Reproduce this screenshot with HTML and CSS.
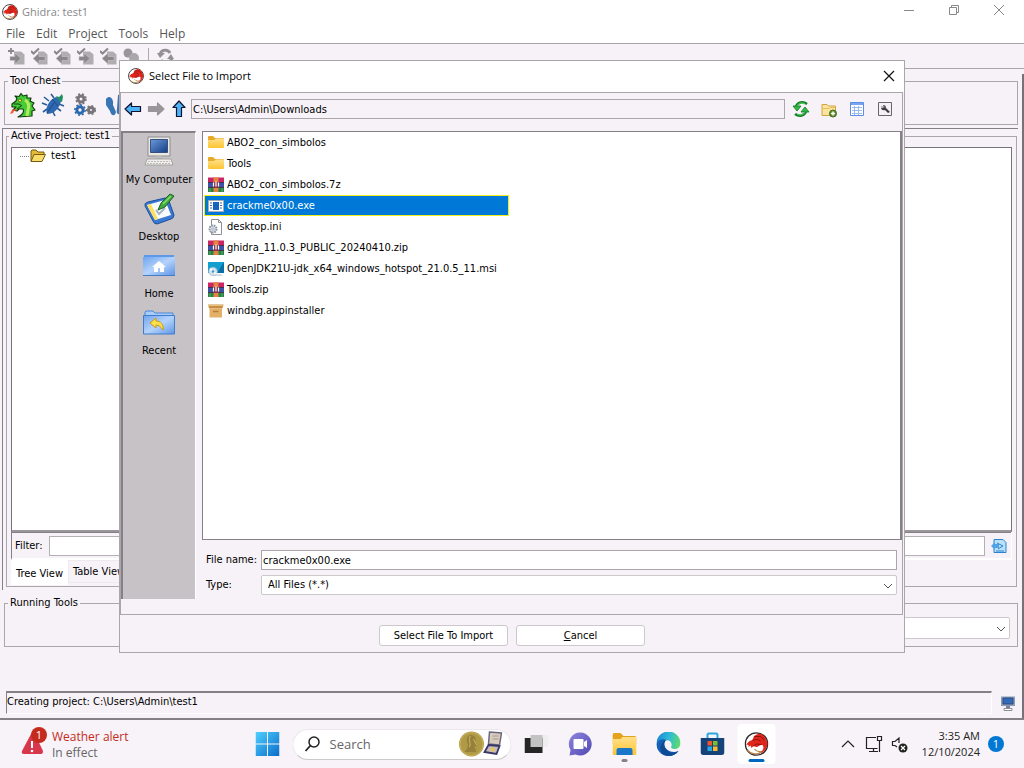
FILE: index.html
```html
<!DOCTYPE html>
<html lang="en">
<head>
    <meta charset="UTF-8">
    <meta name="viewport" content="width=device-width, initial-scale=1.0">
    <title>Ghidra: test1</title>
    <link rel="stylesheet" href="styles.css">
</head>
<body>
    <!-- shared icons -->
    <svg class="sprite" aria-hidden="true">
        <defs>
            <linearGradient id="g-folder" x1="0" y1="0" x2="0" y2="1"><stop offset="0" stop-color="#ffe08a"/><stop offset="1" stop-color="#fcc42f"/></linearGradient>
            <linearGradient id="g-blue" x1="0" y1="0" x2="1" y2="1"><stop offset="0" stop-color="#6fa4ee"/><stop offset=".5" stop-color="#b4d3fb"/><stop offset="1" stop-color="#5f96e6"/></linearGradient>
            <linearGradient id="g-screen" x1="0" y1="0" x2="1" y2="1"><stop offset="0" stop-color="#6d9ad8"/><stop offset="1" stop-color="#123d86"/></linearGradient>
            <linearGradient id="g-win" x1="0" y1="0" x2="1" y2="1"><stop offset="0" stop-color="#4fd0ff"/><stop offset="1" stop-color="#0a6cc9"/></linearGradient>
            <linearGradient id="g-edge" x1="0" y1=".3" x2="1" y2=".5"><stop offset="0" stop-color="#1b87d6"/><stop offset=".5" stop-color="#2fb9d8"/><stop offset="1" stop-color="#5fdc6a"/></linearGradient>
            <linearGradient id="g-chat" x1="0" y1="0" x2="1" y2="1"><stop offset="0" stop-color="#8f86e0"/><stop offset="1" stop-color="#5048b0"/></linearGradient>
        </defs>
        <symbol id="ghidra" viewBox="0 0 24 24">
            <circle cx="12" cy="12" r="11.200" fill="#fff" stroke="#2b2b2b" stroke-width="1.300"/>
            <path d="M3 18 C7 23 14 23 18 19 C15 20 12 20 10 17" fill="none" stroke="#b9854c" stroke-width="1.300"/>
            <path d="M1.500 12.500 L5 9 L8 8 L9.500 4 L14 1.500 L18 2.500 L21 6 L23 11 C23 16 20 20 16 21.500 C19 18 20 14 17.500 13 C15.500 12.500 14 15 11.500 15 L9 14 L7 16 L6 13.500 L4 15 L4 13 Z" fill="#e1261c"/>
            <path d="M8 8 L13 7.500 L16 9 M10 4.500 L16 4.500 L20 8 M9 14 L12 12 L17 12.500" fill="none" stroke="#8c140d" stroke-width="1"/>
        </symbol>
        <symbol id="commit" viewBox="0 0 17 17">
            <path d="M6 3.500 h7 l3.500 3 v10 H6z" fill="#b0adb0"/>
            <path d="M2 8.500 h5 v-3.500 l6 5.500 -6 5.500 v-3.500 h-5z" fill="#8a878a" stroke="#c9c5c9" stroke-width=".6"/>
            <path d="M0 3 h6 M3 0 v6" stroke="#8a878a" stroke-width="1.800"/>
        </symbol>
        <symbol id="checkout" viewBox="0 0 17 17">
            <path d="M7 3.500 h6 l3.500 3 v10 H7z" fill="#b0adb0"/>
            <path d="M14 8.500 h-6 v-3.500 l-6 5.500 6 5.500 v-3.500 h6z" fill="#8a878a" stroke="#c9c5c9" stroke-width=".6"/>
            <path d="M0 3 l2.500 2.500 L8 .5" fill="none" stroke="#8a878a" stroke-width="2"/>
        </symbol>
        <symbol id="checkin" viewBox="0 0 17 17">
            <path d="M6 3.500 h7 l3.500 3 v10 H6z" fill="#b0adb0"/>
            <path d="M2 8.500 h5 v-3.500 l6 5.500 -6 5.500 v-3.500 h-5z" fill="#8a878a" stroke="#c9c5c9" stroke-width=".6"/>
            <path d="M0 3 l2.500 2.500 L8 .5" fill="none" stroke="#8a878a" stroke-width="2"/>
        </symbol>
        <symbol id="arrow" viewBox="0 0 18 16">
            <path d="M1 8 L7.500 2 V5.500 H16.500 V10.500 H7.500 V14 Z" fill="currentColor" stroke="var(--edge, #113)" stroke-width="1.200" stroke-linejoin="round"/>
        </symbol>
        <symbol id="folder" viewBox="0 0 16 16">
            <path d="M0 2 a1 1 0 0 1 1-1 h4 l2 2 h8 a1 1 0 0 1 1 1 v3 H0z" fill="#e9a92a"/>
            <path d="M0 5 h6 l2-1.500 h8 v8.500 a1 1 0 0 1-1 1 H1 a1 1 0 0 1-1-1z" fill="url(#g-folder)"/>
        </symbol>
        <symbol id="rar" viewBox="0 0 16 16">
            <path d="M0 .5 h16 v5 H0z" fill="#cc2566"/>
            <path d="M0 5.500 h16 v5 H0z" fill="#3c51a8"/>
            <path d="M0 10.500 h16 v4.500 H0z" fill="#28824a"/>
            <path d="M0 5.500 h16 M0 10.500 h16" stroke="#30202c" stroke-width=".8"/>
            <path d="M5.500 .5 h5 v14.500 h-5z" fill="#e3853c"/>
            <path d="M5 5 h6 v6 h-6z" fill="#82354b"/>
            <path d="M5.500 5.500 v4 M8 4.500 v5 M10.500 5.500 v4" stroke="#fff" stroke-width="1.200"/>
            <path d="M2 11 v4 M14 11 v4" stroke="#56ad53"/>
        </symbol>
        <symbol id="exe" viewBox="0 0 16 16">
            <path d="M.5 2.500 h15 v11 H.5z" fill="#fff" stroke="#a9adb4"/>
            <path d="M5 4 h6 v8 H5z" fill="#1664bd"/>
            <path d="M2 5 h2 M2 7.500 h2 M2 10 h2 M12 5 h2 M12 7.500 h2 M12 10 h2" stroke="#3f6ca4"/>
        </symbol>
        <symbol id="ini" viewBox="0 0 16 16">
            <path d="M3.500 .5 h7 l3 3 v12 h-10z" fill="#fff" stroke="#8e9093"/>
            <path d="M10.500 .5 v3 h3" fill="none" stroke="#8e9093"/>
            <circle cx="5" cy="10" r="3.500" fill="#dfe3ea" stroke="#8d96a6" stroke-width="2" stroke-dasharray="1.600 .8"/>
            <circle cx="5" cy="10" r="1.200" fill="#fff" stroke="#8d96a6" stroke-width=".7"/>
        </symbol>
        <symbol id="msi" viewBox="0 0 16 16">
            <path d="M0 1 h16 v11 H0z" fill="#119fd0"/>
            <path d="M16 1 v11 H9z" fill="#0a6ea8"/>
            <path d="M2 13 h11 l2 2 H4z" fill="#d7dce2"/>
            <circle cx="5" cy="10.500" r="4.300" fill="#d5e2ee" stroke="#9fb3c5" stroke-width=".6"/>
            <path d="M5 10.500 L2 7.500 M5 10.500 l3.500 2.500" stroke="#f9fcff" stroke-width="1.400"/>
            <circle cx="5" cy="10.500" r="1.200" fill="#3b97c6"/>
        </symbol>
        <symbol id="box" viewBox="0 0 16 16">
            <path d="M0 1.500 h15.500 l-1 4 H1z" fill="#c78f43"/>
            <path d="M1.500 5.500 h12.500 v9 h-12.500z" fill="#e3b067"/>
            <path d="M5 8.500 h5.500" stroke="#b57f3b" stroke-width="1.500"/>
            <path d="M0 2.500 h15.500" stroke="#e9c07e"/>
        </symbol>
        <symbol id="screen" viewBox="0 0 32 32">
            <path d="M5 1 h22 v19 H5z" fill="#e9e8e4" stroke="#8d8d8c"/>
            <path d="M7.500 3.500 h17 v13 h-17z" fill="url(#g-screen)" stroke="#38507d"/>
            <path d="M13 20 h6 l1 4 h-8z" fill="#bbb"/>
            <path d="M4 23 h24 l2 6 H2z" fill="#f0efec" stroke="#a3a3a1"/>
            <path d="M5 25.500 h22 M4 27.500 h24" stroke="#bcbcba" stroke-dasharray="2 1"/>
        </symbol>
        <symbol id="chevron" viewBox="0 0 10 6"><path d="M1 1 l4 4 4-4" fill="none" stroke="#555" stroke-width="1"/></symbol>
    </svg>

    <main class="window">
        <header class="titlebar">
            <svg class="icon16"><use href="#ghidra"/></svg>
            <h1>Ghidra: test1</h1>
            <div class="window-buttons">
                <button aria-label="Minimize"><svg viewBox="0 0 12 12"><path d="M1 6.500 h10"/></svg></button>
                <button aria-label="Restore"><svg viewBox="0 0 12 12"><path d="M1.500 3.500 h7 v7 h-7z M3.500 3.500 v-2 h7 v7 h-2"/></svg></button>
                <button aria-label="Close"><svg viewBox="0 0 12 12"><path d="M1 1 l10 10 M11 1 L1 11"/></svg></button>
            </div>
        </header>
        <nav class="menubar">
            <button>File</button>
            <button>Edit</button>
            <button>Project</button>
            <button>Tools</button>
            <button>Help</button>
        </nav>
        <div class="toolbar">
            <button aria-label="Add to version control" disabled><svg><use href="#commit"/></svg></button>
            <button aria-label="Check out" disabled><svg><use href="#checkout"/></svg></button>
            <button aria-label="Update" disabled><svg><use href="#checkout"/></svg></button>
            <button aria-label="Check in" disabled><svg><use href="#checkin"/></svg></button>
            <button aria-label="Undo checkout" disabled><svg><use href="#checkout"/></svg></button>
            <button aria-label="Find checkouts" disabled><svg viewBox="0 0 17 17"><circle cx="5" cy="5" r="4.500" fill="#999699"/><circle cx="11" cy="10" r="5" fill="#aaa7aa"/></svg></button>
            <span class="separator"></span>
            <button aria-label="Refresh" disabled><svg viewBox="0 0 17 17"><path d="M3 7 C4 1 11 1 13 5 M15 10 C13 16 6 16 4 12" fill="none" stroke="#949194" stroke-width="3"/><path d="M0 5 h8 l-5 5z M10 11 l4-5 3 5z" fill="#949194"/></svg></button>
        </div>

        <div class="workspace">
            <fieldset class="group tool-chest">
                <legend>Tool Chest</legend>
                <div class="tools">
                    <button aria-label="CodeBrowser">
                        <svg viewBox="0 0 26 26"><path d="M2 12 L6 9 L7 6 L5 4 L9 4.500 L11 1.500 L13 4 L17 3 L17 6 L21 6 L20 9 L24 11 L22 14 L25 18 L22 19 L22 24 L8 25 C12 23 15 20 13 17 L9 17 L7 19 L3 18 L6 15 L2 15 Z" fill="#45cc39" stroke="#143d10" stroke-width="1.200" stroke-linejoin="round"/><path d="M15 8 C20 11 19 15 18 18 L17 24" fill="none" stroke="#b6ea5c" stroke-width="3"/><path d="M4 12 L9 12 L12 14 M7 17 L11 14" fill="none" stroke="#143d10"/><circle cx="10" cy="8.500" r="1.500" fill="#ffec2e" stroke="#143d10" stroke-width=".6"/><path d="M5 17 l-3 1 -2 4 3-1 1-2 3-1z" fill="#f6562a"/></svg>
                    </button>
                    <button aria-label="Debugger">
                        <svg viewBox="0 0 26 26"><path d="M15 5 C19 6 21 9 19 12 C17 18 12 22 6 22 C4 17 7 8 15 5 Z" fill="#2d68b0"/><path d="M8 9 L3 5 M6 13 L1 11 M6 17 L2 20 M13 6 L10 2 M16 16 L20 19 M18 12 L23 14 M12 20 L14 24" fill="none" stroke="#285c9c" stroke-width="1.600"/><path d="M11 7 L17 14 M13 11 L6 21" stroke="#1d4379" stroke-width=".8"/><path d="M15 4 l3 1 3-3 1 3 -1 5 -3-1z" fill="#219060"/></svg>
                    </button>
                    <button aria-label="Emulator">
                        <svg viewBox="0 0 26 26"><g fill="none" stroke-width="3"><circle cx="9" cy="7" r="3" stroke="#777578"/><circle cx="8" cy="18" r="3.200" stroke="#2c68ae"/><circle cx="19" cy="18" r="2.500" stroke="#777578"/></g><g fill="none" stroke-width="1.500" stroke-dasharray="2 2"><circle cx="9" cy="7" r="5" stroke="#777578"/><circle cx="8" cy="18" r="5.200" stroke="#2c68ae"/><circle cx="19" cy="18" r="4.300" stroke="#777578"/></g></svg>
                    </button>
                    <button aria-label="Version Tracking">
                        <svg viewBox="0 0 26 26"><path d="M3 7 C7 2 11 7 10 13 L13 20 C12 25 8 24 7 19 L3 13z M15 3 C20 1 22 5 21 12 L18 21 C15 24 13 21 14 17z" fill="#3974b5"/></svg>
                    </button>
                </div>
            </fieldset>

            <div class="project-pane">
                <fieldset class="group project">
                    <legend>Active Project: test1</legend>
                    <div class="tree">
                        <div class="tree-node">
                            <span class="tree-line"></span>
                            <svg class="icon16" viewBox="0 0 16 16"><path d="M1 13 V3 L2 2 h4 l2 2 h6 v3" fill="#e3ba37" stroke="#765b11"/><path d="M1 13.500 L4 6.500 h11.500 L12 13.500z" fill="#f7dc6c" stroke="#765b11"/></svg>
                            <span>test1</span>
                        </div>
                    </div>
                    <div class="filter-row">
                        <div class="filter-bar">
                            <label for="filter">Filter:</label>
                            <input id="filter" type="text">
                            <button aria-label="Filter options"><svg class="icon16" viewBox="0 0 16 16"><path d="M3 1.500 h9 l3 3 v10 H3z" fill="#bde0fa" stroke="#2683cf"/><path d="M0 8 l4-4 v2 h4 v4 H4 v2z" fill="#50a3e6"/><path d="M6 5 l6 3 -5 3 M5 13 h8" fill="none" stroke="#2683cf"/></svg></button>
                        </div>
                    </div>
                    <div class="tabs">
                        <button class="tab active">Tree View</button>
                        <button class="tab">Table View</button>
                    </div>
                </fieldset>
            </div>

            <fieldset class="group running">
                <legend>Running Tools</legend>
                <div class="select-box">
                    <select aria-label="Workspace"><option></option></select>
                    <svg class="chevron"><use href="#chevron"/></svg>
                </div>
            </fieldset>
        </div>

        <footer class="statusbar">
            <div class="status-text">Creating project: C:\Users\Admin\test1</div>
            <button aria-label="Console"><svg class="icon16" viewBox="0 0 16 16"><path d="M1 1.500 h14 v9.500 H1z" fill="#8d9bb5"/><path d="M3 3 h10 v6 H3z" fill="#356bb5" stroke="#24447c" stroke-width=".8"/><path d="M6 11 h4 v2 H6z" fill="#77818f"/><path d="M4 13.500 h8 v2 H4z" fill="#fff" stroke="#8a8f98"/></svg></button>
        </footer>
    </main>

    <section class="dialog" role="dialog" aria-labelledby="dialog-title">
        <header class="dialog-title">
            <svg class="icon16"><use href="#ghidra"/></svg>
            <h2 id="dialog-title">Select File to Import</h2>
            <button aria-label="Close"><svg viewBox="0 0 12 12"><path d="M1 1 l10 10 M11 1 L1 11"/></svg></button>
        </header>
        <div class="dialog-content">
            <div class="path-bar">
                <div class="path-nav">
                    <button class="blue" aria-label="Back"><svg><use href="#arrow"/></svg></button>
                    <button class="grey flip" aria-label="Forward"><svg><use href="#arrow"/></svg></button>
                    <button class="blue up" aria-label="Up"><svg><use href="#arrow"/></svg></button>
                </div>
                <input class="path" type="text" value="C:\Users\Admin\Downloads" aria-label="Path" readonly>
                <div class="path-tools">
                    <button aria-label="Refresh"><svg viewBox="0 0 18 18"><path d="M4 7 C5 2 11 1 15 4 M14 11 C13 16 7 17 3 14" fill="none" stroke="#15802b" stroke-width="2.500"/><path d="M1 6 L9 6 L5 11z M9 12 L13 7 L17 12z" fill="#31bd3f" stroke="#0d7424" stroke-width=".8"/><path d="M5 6 C6 3 10 2 13 4 M13 12 C12 15 8 16 5 14" fill="none" stroke="#4cd455"/></svg></button>
                    <button aria-label="New folder"><svg viewBox="0 0 18 18"><path d="M2 15.500 V4.500 h5 l1.500 1.500 h7 v9.500z" fill="#fbe49b" stroke="#d0a345"/><path d="M2.500 8.500 h7 l1-1 h5" fill="none" stroke="#e8bd5c"/><circle cx="13" cy="13.500" r="3.500" fill="#5d8e2b" stroke="#456b20"/><path d="M11 13.500 h4 M13 11.500 v4" stroke="#fff" stroke-width="1.400"/></svg></button>
                    <button aria-label="Details view"><svg viewBox="0 0 18 18"><path d="M2.500 2.500 h13 v13 h-13z" fill="#fff" stroke="#5d8ee5"/><path d="M3 4 h12" stroke="#79a4ef" stroke-width="2"/><path d="M4 7.500 h10 M4 10.500 h10 M4 13.500 h10 M6.500 6 v9 M10.500 6 v9" stroke="#9ab9ef"/></svg></button>
                    <button aria-label="Options"><svg viewBox="0 0 18 18"><path d="M2.500 2.500 h13 v13 h-13z" fill="#f4f1f4" stroke="#666"/><path d="M5 8 a3 3 0 0 0 4 2 l3 3 2-1 -4-4 a3 3 0 0 0-3-3 l1 2 -1 1z" fill="#3d3b3e"/><path d="M5 7 h5" stroke="#777"/></svg></button>
                </div>
            </div>

            <div class="chooser">
                <nav class="places">
                    <button>
                        <svg><use href="#screen"/></svg>
                        My Computer
                    </button>
                    <button>
                        <svg viewBox="0 0 32 32"><path d="M2 13 Q1 10 5 9 L22 5 Q25 5 26 8 L31 22 Q31 25 28 26 L14 31 Q11 31 10 28 Z" fill="#3b78d2" stroke="#1c4f9c"/><path d="M4 12 L22 7 L28 22 L12 27 Z" fill="#f9fbff"/><path d="M4 12 L8 11 L15 26 L12 27z" fill="#ffe05b"/><path d="M13 17 L16 21 L22 15" fill="none" stroke="#a7b3c5" stroke-width="2"/><path d="M15 17 L18 10 L27 1 L31 3 L22 14 Z" fill="#41a63b" stroke="#176623"/><path d="M20 11 L28 3" stroke="#92dc7b" stroke-width="1.500"/></svg>
                        Desktop
                    </button>
                    <button>
                        <svg viewBox="0 0 32 32"><path d="M1 5 h30 v4 H1z" fill="#5e98e8"/><path d="M0 7 h32 v18 H0z" fill="url(#g-blue)"/><path d="M0 25.500 h32" stroke="#457bc7"/><path d="M16 11 l7 6 h-2 v5 h-4 v-4 h-2 v4 h-4 v-5 H9z" fill="#fff"/></svg>
                        Home
                    </button>
                    <button>
                        <svg viewBox="0 0 32 32"><path d="M2 9 V5 l1-1 h7 l2 2 h18 v3" fill="#a9cdf8" stroke="#4a86d8"/><path d="M.5 8.500 h31 v18.500 H.5z" fill="url(#g-blue)" stroke="#3e7ccc"/><path d="M7 16 L13 11 V14 C18 14 21 18 20 23 C18 20 16 18 13 18 V21 Z" fill="#ffe04b" stroke="#c99a15"/></svg>
                        Recent
                    </button>
                </nav>

                <div class="files-column">
                    <ul class="file-list">
                        <li><svg class="icon16"><use href="#folder"/></svg>ABO2_con_simbolos</li>
                        <li><svg class="icon16"><use href="#folder"/></svg>Tools</li>
                        <li><svg class="icon16"><use href="#rar"/></svg>ABO2_con_simbolos.7z</li>
                        <li class="selected"><svg class="icon16"><use href="#exe"/></svg>crackme0x00.exe</li>
                        <li><svg class="icon16"><use href="#ini"/></svg>desktop.ini</li>
                        <li><svg class="icon16"><use href="#rar"/></svg>ghidra_11.0.3_PUBLIC_20240410.zip</li>
                        <li><svg class="icon16"><use href="#msi"/></svg>OpenJDK21U-jdk_x64_windows_hotspot_21.0.5_11.msi</li>
                        <li><svg class="icon16"><use href="#rar"/></svg>Tools.zip</li>
                        <li><svg class="icon16"><use href="#box"/></svg>windbg.appinstaller</li>
                    </ul>
                    <form class="fields">
                        <label for="filename">File name:</label>
                        <input id="filename" type="text" value="crackme0x00.exe">
                        <label for="filetype">Type:</label>
                        <div class="select-box">
                            <select id="filetype"><option>All Files (*.*)</option></select>
                            <svg class="chevron"><use href="#chevron"/></svg>
                        </div>
                    </form>
                </div>
            </div>
        </div>
        <footer class="dialog-buttons">
            <button>Select File To Import</button>
            <button><u>C</u>ancel</button>
        </footer>
    </section>

    <footer class="taskbar">
        <button class="weather">
            <svg viewBox="0 0 28 28"><path d="M11 7 Q13 5 15 7 L23 24 Q23 27 21 27 H4 Q1 27 2 24 Z" fill="#d8364a"/><path d="M12 14 v7" stroke="#fff" stroke-width="2"/><circle cx="12" cy="24" r="1.300" fill="#fff"/><circle cx="19" cy="8" r="8" fill="#c42b1c"/><text x="19" y="12" text-anchor="middle" fill="#fff" font-size="11">1</text></svg>
            <span><b>Weather alert</b><small>In effect</small></span>
        </button>
        <div class="taskbar-center">
            <button aria-label="Start"><svg viewBox="0 0 24 24"><path d="M0 0 h11.500 v11.500 H0z M12.500 0 H24 v11.500 H12.500z M0 12.500 h11.500 V24 H0z M12.500 12.500 H24 V24 H12.500z" fill="url(#g-win)"/></svg></button>
            <label class="search">
                <svg class="glass" viewBox="0 0 16 16"><circle cx="9.500" cy="6" r="5" fill="none" stroke="#222" stroke-width="1.500"/><path d="M6 9.500 L1 15" stroke="#222" stroke-width="1.800"/></svg>
                <input type="text" placeholder="Search" aria-label="Search">
                <svg class="medal" viewBox="0 0 44 26"><circle cx="13" cy="13" r="12.500" fill="#b19a45"/><circle cx="13" cy="13" r="11.500" fill="none" stroke="#c7b25f"/><path d="M12 4 C17 4 18 8 17 11 L19 14 L16 16 L18 21 H6 C8 18 10 17 9 12 C7 8 9 5 12 4z" fill="#97803a"/><path d="M12 5 C9 8 13 11 11 16 M15 8 L18 14" stroke="#cfb969" fill="none"/><path d="M31 1 L43 2 L41 14 L30 13z" fill="#d9cbbb" stroke="#6b6782" stroke-width="1.500"/><path d="M30 14 L41 15 L38 23 L26 21z" fill="#c5bac4" stroke="#383765" stroke-width="1.800"/><circle cx="34" cy="18.500" r="2.300" fill="#e1c65c"/><path d="M34 5 h6 M34 8 h6" stroke="#a69b95"/></svg>
            </label>
            <button aria-label="Task view"><svg viewBox="0 0 24 24"><path d="M8 3 h16 v12 H8z" fill="#efedef"/><path d="M0 6 h18 v15 H0z" fill="#252525"/><path d="M6 3 h12 v12 H6z" fill="#c4c3c4"/></svg></button>
            <button aria-label="Chat"><svg viewBox="0 0 24 24"><path d="M12 .5 a11.500 11.500 0 1 1-5 22 L1 23.500 2 18 A11.500 11.500 0 0 1 12 .5z" fill="url(#g-chat)"/><path d="M6 7 h8 a1 1 0 0 1 1 1 v8 a1 1 0 0 1-1 1 H6 a1 1 0 0 1-1-1 V8 a1 1 0 0 1 1-1z M15.500 10 l3-2 v8 l-3-2z" fill="#fff"/></svg></button>
            <button class="open" aria-label="File Explorer"><svg viewBox="0 0 24 24"><path d="M0 3 a2 2 0 0 1 2-2 h6 l3 3 h11 a2 2 0 0 1 2 2 v6 H0z" fill="#e5a21b"/><path d="M0 7 h8 l2-2 h14 v17 a1 1 0 0 1-1 1 H1 a1 1 0 0 1-1-1z" fill="url(#g-folder)"/><path d="M4 23 v-5 a2 2 0 0 1 2-2 h12 a2 2 0 0 1 2 2 v5z" fill="#1877c9"/></svg></button>
            <button aria-label="Edge"><svg viewBox="0 0 24 24"><path d="M0 12 A12 12 0 0 1 24 11 C24 15 21 17 18 17 C15 17 14 16 15 14 C16 10 12 7 8 9 C4 10 2 14 3 18 C1 16 0 14 0 12z" fill="url(#g-edge)"/><path d="M0 12 C1 8 6 6 10 8 C7 9 7 13 9 16 C12 20 18 21 22 19 C17 26 7 25 3 20 C1 18 0 15 0 12z" fill="#1560b5"/><path d="M10 8 C7 10 7 15 11 19 C14 21 18 21 22 19 C18 25 10 25 6 22 C2 17 4 10 10 8z" fill="#104a94"/></svg></button>
            <button aria-label="Microsoft Store"><svg viewBox="0 0 24 24"><path d="M7 6 V3 a1.500 1.500 0 0 1 1.500-1.500 h7 A1.500 1.500 0 0 1 17 3 v3" fill="none" stroke="#2ba7e0" stroke-width="2"/><path d="M0 6 h24 v14 a3 3 0 0 1-3 3 H3 a3 3 0 0 1-3-3z" fill="#154278"/><path d="M7 9 h4.500 v4.500 H7z" fill="#f1532b"/><path d="M12.500 9 H17 v4.500 h-4.500z" fill="#81bc2c"/><path d="M7 14.500 h4.500 V19 H7z" fill="#28a8e8"/><path d="M12.500 14.500 H17 V19 h-4.500z" fill="#fdbb2b"/></svg></button>
            <button class="open current" aria-label="Ghidra"><svg><use href="#ghidra"/></svg></button>
        </div>
        <div class="tray">
            <button aria-label="Hidden icons"><svg viewBox="0 0 18 18"><path d="M3 12 l6-6 6 6"/></svg></button>
            <button aria-label="Network"><svg viewBox="0 0 18 18"><path d="M11 2.500 H1.500 v11 h11 M8.500 14 v3 M4 16.500 h9 M12.500 1.500 h4 v4 h-4z M14.500 6 v11"/></svg></button>
            <button aria-label="Volume muted"><svg viewBox="0 0 18 18"><path d="M6 12 L4 10.500 H1.500 v-4 H4 L8 3 v5"/><circle cx="12" cy="13" r="4.500" class="mute"/><path d="M10 11 l4 4 M14 11 l-4 4" class="cross"/></svg></button>
            <time datetime="2024-12-10T03:35">3:35 AM<br>12/10/2024</time>
            <span class="badge">1</span>
        </div>
    </footer>
</body>
</html>
```

FILE: styles.css
```css
* {
    box-sizing: border-box;
}
body {
    margin: 0;
    height: 100vh;
    display: flex;
    flex-direction: column;
    position: relative;
    background: #f7f2f7;
    color: #000;
    font-family: "DejaVu Sans Condensed", "DejaVu Sans", sans-serif;
    font-size: 11px;
    line-height: 14px;
    overflow: hidden;
}
button, input, select {
    font: inherit;
    color: inherit;
    margin: 0;
}
button {
    padding: 0;
    border: 0;
    background: none;
}
svg {
    display: block;
    flex: none;
}
h1, h2 {
    margin: 0;
    font-weight: normal;
}
.sprite {
    position: absolute;
    width: 0;
    height: 0;
}
.icon16 {
    width: 16px;
    height: 16px;
}

/* main window */
.window {
    flex: 1;
    min-height: 0;
    display: flex;
    flex-direction: column;
    border-bottom: 2px solid #858085;
}
.titlebar {
    display: flex;
    align-items: center;
    height: 23px;
    padding-left: 2px;
    gap: 4px;
    background: #fff;
    color: #888;
}
.titlebar h1 {
    flex: 1;
    font: 11px/16px "Open Sans", sans-serif;
}
.window-buttons {
    display: flex;
    align-self: flex-start;
    gap: 33px;
    padding: 4px 19px 0 0;
}
.window-buttons svg {
    width: 12px;
    height: 12px;
    fill: none;
    stroke: #888;
}
.menubar {
    display: flex;
    gap: 11px;
    height: 21px;
    padding: 1px 6px 0;
    background: #fff;
    border-bottom: 1px solid #a8a5a8;
    font: 12px/20px "Open Sans", sans-serif;
    color: #555;
}
.toolbar {
    display: flex;
    align-items: center;
    gap: 6px;
    height: 25px;
    padding: 0 8px;
    border-bottom: 1px solid #a8a5a8;
}
.toolbar svg {
    width: 17px;
    height: 17px;
}
.separator {
    width: 1px;
    height: 17px;
    margin: 0 2px;
    background: #aaa;
}
.workspace {
    flex: 1;
    min-height: 0;
    display: flex;
    flex-direction: column;
    margin-top: 5px;
    padding-right: 4px;
    border-right: 2px solid #77727a;
}
.group {
    min-width: 0;
    margin: 0;
    padding: 0;
    border: 1px solid #aaa6aa;
}
.group legend {
    margin-left: 3px;
    padding: 0 2px;
}
.tool-chest {
    height: 51px;
    margin-left: 4px;
}
.tools {
    display: flex;
    gap: 5px;
    padding: 4px 5px;
}
.tools svg {
    width: 26px;
    height: 26px;
}
.project-pane {
    flex: 1;
    min-height: 0;
    display: flex;
    margin: 3px 0 6px 2px;
    padding: 0 1px 3px 3px;
    border-top: 1px solid #858085;
    border-left: 1px solid #858085;
}
.project {
    flex: 1;
    display: flex;
    flex-direction: column;
    padding: 4px 4px 1px;
}
.project legend {
    margin-left: -2px;
}
.tree {
    flex: 1;
    background: #fff;
    border: 1px solid #77727a;
    border-bottom: 2px solid #999599;
}
.tree-node {
    display: flex;
    align-items: center;
    gap: 5px;
    padding-left: 8px;
}
.tree-line {
    width: 9px;
    margin-right: -4px;
    border-top: 1px dotted #888;
}
.filter-row {
    border-left: 1px solid #858085;
    border-bottom: 2px solid #fff;
    border-right: 1px solid #fff;
}
.filter-bar {
    display: flex;
    align-items: center;
    height: 26px;
    gap: 6px;
    padding: 0 4px 0 3px;
    border-top: 1px solid #858085;
}
.filter-bar input {
    flex: 1;
    height: 20px;
    background: #fff;
    border: 1px solid #b3afb3;
}
.tabs {
    display: flex;
    height: 25px;
}
.tab {
    height: 23px;
    padding: 0 4px;
    border: 1px solid #eee9ee;
    white-space: nowrap;
}
.tab.active {
    height: 25px;
    padding: 3px 5px 0;
    border: 0;
    background: #fff;
}
.running {
    height: 51px;
    margin: 0 0 0 4px;
}
.running .select-box {
    margin: 7px 7px 0 50%;
}
.select-box {
    position: relative;
}
.select-box select {
    display: block;
    width: 100%;
    height: 20px;
    padding: 0 6px;
    appearance: none;
    background: #fff;
    border: 1px solid #ccc8cc;
    border-radius: 2px;
}
.select-box select:empty, .running .select-box select {
    height: 22px;
}
.chevron {
    position: absolute;
    right: 4px;
    top: 50%;
    width: 10px;
    height: 6px;
    margin-top: -2px;
}
.statusbar {
    display: flex;
    align-items: center;
    gap: 8px;
    height: 71px;
    padding: 44px 6px 4px;
    border-right: 2px solid #77727a;
}
.status-text {
    flex: 1;
    height: 23px;
    padding: 2px 0;
    border: 1px solid #fff;
    border-top: 2px solid #858085;
    border-left: 1px solid #858085;
}

/* import dialog */
.dialog {
    position: absolute;
    left: 119px;
    right: 119px;
    top: 60px;
    height: 593px;
    display: flex;
    flex-direction: column;
    background: #f7f2f7;
    border: 1px solid #aaa6aa;
}
.dialog-title {
    display: flex;
    align-items: center;
    gap: 5px;
    height: 31px;
    padding: 0 9px 2px 8px;
    background: #fff;
}
.dialog-title h2 {
    flex: 1;
    font: 11px/16px "Open Sans", sans-serif;
}
.dialog-title button svg {
    width: 12px;
    height: 12px;
    fill: none;
    stroke: #111;
    stroke-width: 1.2;
}
.dialog-content {
    flex: 1;
    min-height: 0;
    display: flex;
    flex-direction: column;
    margin-right: 1px;
    border: 1px solid #aaa6aa;
}
.path-bar {
    display: flex;
    align-items: center;
    gap: 3px;
    height: 32px;
    margin-bottom: 6px;
    padding: 0 8px 0 3px;
}
.path-nav {
    display: flex;
    gap: 5px;
}
.path-bar svg {
    width: 18px;
    height: 18px;
}
.blue {
    color: #4cb4f5;
}
.grey {
    color: #999699;
    --edge: #999699;
}
.flip svg {
    transform: scaleX(-1);
}
.up svg {
    transform: rotate(90deg);
}
.path {
    flex: 1;
    height: 20px;
    padding: 0 1px;
    background: #f7f2f7;
    border: 1px solid #aaa6aa;
}
.path-tools {
    display: flex;
    gap: 10px;
    padding-left: 4px;
}
.chooser {
    flex: 1;
    min-height: 0;
    display: flex;
    gap: 6px;
}
.places {
    display: flex;
    flex-direction: column;
    width: 75px;
    margin-bottom: 15px;
    background: #c6c2c6;
    border-top: 2px solid #858085;
    border-left: 2px solid #858085;
    border-right: 1px solid #fff;
}
.places button {
    display: flex;
    flex-direction: column;
    align-items: center;
    gap: 5px;
    height: 57px;
    padding-top: 3px;
    white-space: nowrap;
}
.places svg {
    width: 32px;
    height: 32px;
}
.files-column {
    flex: 1;
    display: flex;
    flex-direction: column;
}
.file-list {
    flex: 1;
    margin: 0;
    padding: 0 1px;
    list-style: none;
    background: #fff;
    border: 1px solid #858085;
    border-right-width: 2px;
}
.file-list li {
    display: flex;
    align-items: center;
    gap: 3px;
    width: 305px;
    height: 21px;
    padding: 0 4px;
    white-space: nowrap;
}
.file-list .selected {
    background: #0078d7;
    border: 1px solid #f2ee1c;
    padding: 0 3px;
    color: #fff;
}
.fields {
    display: grid;
    grid-template-columns: 55px 1fr;
    align-items: center;
    gap: 5px 0;
    padding: 10px 5px 19px 4px;
}
.fields input {
    min-width: 0;
    height: 20px;
    padding: 0 1px;
    background: #fff;
    border: 1px solid #aaa6aa;
}
.dialog-buttons {
    display: flex;
    justify-content: center;
    gap: 8px;
    padding: 10px 0 6px;
}
.dialog-buttons button {
    width: 129px;
    height: 21px;
    background: #fff;
    border: 1px solid #ccc8cc;
    border-radius: 3px;
}

/* taskbar */
.taskbar {
    position: relative;
    display: flex;
    align-items: center;
    justify-content: space-between;
    height: 48px;
    padding: 0 20px;
    background: #f7f3f8;
    font: 11px/16px "Open Sans", sans-serif;
    color: #222;
}
.weather {
    display: flex;
    align-items: center;
    gap: 4px;
    padding-top: 2px;
    text-align: left;
}
.weather svg {
    width: 28px;
    height: 28px;
    margin-top: -8px;
}
.weather b, .weather small {
    display: block;
    font-size: 12px;
    font-weight: normal;
}
.weather b {
    color: #c42b1c;
}
.weather small {
    color: #666;
}
.taskbar-center {
    position: absolute;
    left: 50%;
    top: 4px;
    transform: translateX(-50%);
    display: flex;
    align-items: center;
    gap: 6px;
}
.taskbar-center button {
    position: relative;
    display: flex;
    align-items: center;
    justify-content: center;
    width: 38px;
    height: 40px;
    border-radius: 4px;
}
.taskbar-center button svg {
    width: 24px;
    height: 24px;
}
.open::after {
    content: "";
    position: absolute;
    left: 50%;
    bottom: 2px;
    width: 6px;
    height: 3px;
    margin-left: -3px;
    border-radius: 2px;
    background: #858085;
}
.taskbar-center .current {
    background: #fff;
}
.current::after {
    width: 16px;
    margin-left: -8px;
    background: #0067c0;
}
.search {
    display: flex;
    align-items: center;
    width: 219px;
    height: 31px;
    padding: 0 8px 0 11px;
    background: #fff;
    border: 1px solid #ece7ec;
    border-bottom-color: #ccc8cc;
    border-radius: 16px;
}
.search input {
    flex: 1;
    min-width: 0;
    padding: 0 9px;
    border: 0;
    background: none;
    font-size: 13px;
}
.search input::placeholder {
    color: #666;
}
.glass {
    width: 16px;
    height: 16px;
}
.medal {
    width: 44px;
    height: 26px;
}
.tray {
    display: flex;
    align-items: center;
    gap: 8px;
}
.tray svg {
    width: 18px;
    height: 18px;
    fill: none;
    stroke: #222;
    stroke-width: 1.2;
}
.tray .mute {
    fill: #222;
    stroke: none;
}
.tray .cross {
    stroke: #fff;
}
.tray time {
    margin-left: 5px;
    text-align: right;
}
.badge {
    width: 16px;
    height: 16px;
    border-radius: 50%;
    background: #0078d4;
    color: #fff;
    text-align: center;
}
```
